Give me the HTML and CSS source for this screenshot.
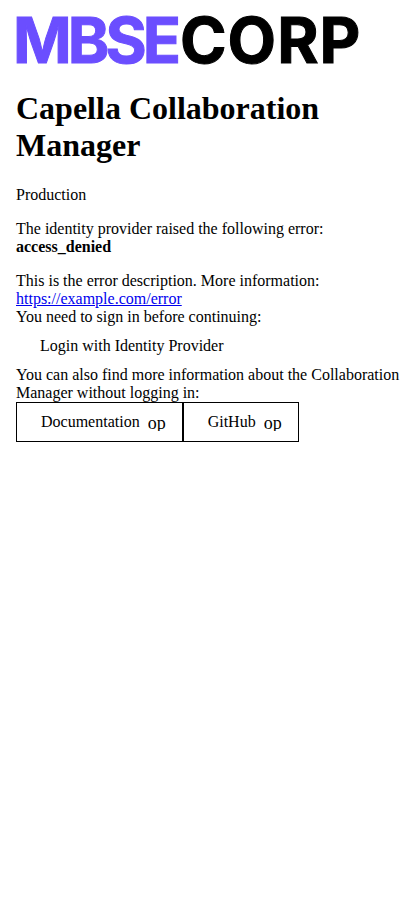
FILE: index.html
```html
<!DOCTYPE html>
<html lang="en">
<head>
<meta charset="utf-8">
<meta name="viewport" content="width=device-width, initial-scale=1">
<title>Capella Collaboration Manager</title>
<link rel="stylesheet" href="styles.css">
</head>
<body>
<main class="page">
  <svg class="logo" width="344" height="64" viewBox="0 0 344 64" role="img" aria-label="MBSECORP">
    <text class="logo-mbse" x="-3" y="55">MBSE</text>
    <text class="logo-corp" x="164" y="55">CORP</text>
  </svg>
  <h1 class="title">Capella Collaboration Manager</h1>
  <div class="environment">Production</div>
  <div class="error">
    <p class="error-reason">The identity provider raised the following error:<br><b>access_denied</b></p>
    <div>This is the error description. More information: <a href="https://example.com/error">https://example.com/error</a></div>
  </div>
  <div>You need to sign in before continuing:</div>
  <button class="button" type="button">Login with Identity Provider</button>
  <div>You can also find more information about the Collaboration Manager without logging in:</div>
  <nav class="links">
    <a class="button outlined" href="#docs">Documentation<span class="icon" aria-hidden="true">op</span></a>
    <a class="button outlined" href="#github">GitHub<span class="icon" aria-hidden="true">op</span></a>
  </nav>
</main>
</body>
</html>
```
FILE: styles.css
```css
* {
  box-sizing: border-box;
}

body {
  margin: 0;
  background: #fff;
  color: #000;
  font: 16px/18px "Liberation Serif", "Times New Roman", serif;
}

.page {
  padding: 8px 16px;
}

.logo {
  display: block;
  max-width: 100%;
  overflow: visible;
  font: 700 63px/64px Inter, sans-serif;
  stroke-width: 1px;
}

.logo-mbse {
  fill: #6b4eff;
  stroke: #6b4eff;
  letter-spacing: -4px;
}

.logo-corp {
  fill: #000;
  stroke: #000;
  letter-spacing: 1px;
}

.title {
  margin: 18px 0 22px;
  font-size: 32px;
  line-height: 37px;
}

.error {
  margin-top: 16px;
}

.error-reason {
  margin: 0 0 16px;
}

.button {
  display: flex;
  align-items: center;
  gap: 8px;
  height: 40px;
  padding: 0 24px;
  border: 0;
  background: transparent;
  color: inherit;
  font: inherit;
  text-decoration: none;
  cursor: pointer;
}

.links {
  display: flex;
}

.outlined {
  padding-right: 16px;
  border: 1px solid #000;
}

.icon {
  width: 18px;
  height: 18px;
  overflow: hidden;
  font-size: 18px;
  line-height: 20px;
}
```
